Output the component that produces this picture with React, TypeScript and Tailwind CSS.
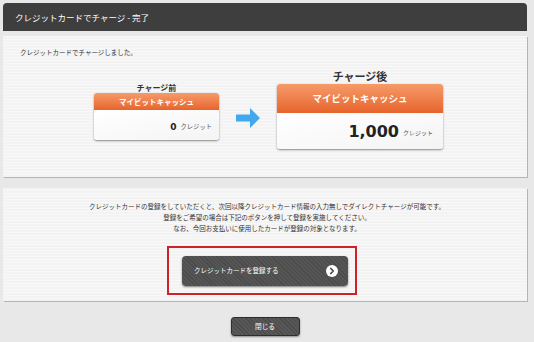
import { ChevronRight } from 'lucide-react';

const jp = { fontFamily: '"Noto Sans CJK JP", "Noto Sans", sans-serif' };

function CashCard({ big }: { big: boolean }) {
  // orange header + white body, two sizes (before / after)
  return (
    <div
      className={
        big
          ? 'w-[166px] h-[65px] rounded-[3px] overflow-hidden bg-white shadow-[0_1px_2px_rgba(0,0,0,0.45)] flex flex-col'
          : 'w-[125px] h-[47px] rounded-[3px] overflow-hidden bg-white shadow-[0_1px_2px_rgba(0,0,0,0.45)] flex flex-col'
      }
    >
      <div
        className={
          big
            ? 'h-[29px] flex items-center justify-center bg-gradient-to-b from-[#f59b68] to-[#e7632b] text-white font-bold text-[9.5px]'
            : 'h-[17px] flex items-center justify-center bg-gradient-to-b from-[#f59b68] to-[#e7632b] text-white font-bold text-[7.5px]'
        }
      >
        マイビットキャッシュ
      </div>
      <div
        className={
          big
            ? 'flex-1 flex items-center justify-end pr-[10px] pt-[2px] bg-gradient-to-br from-white to-[#f4f4f4]'
            : 'flex-1 flex items-center justify-end pr-[7px] pt-[4px] bg-gradient-to-br from-white to-[#f4f4f4]'
        }
      >
        <span
          className={big ? 'font-bold text-[16px] text-[#222] leading-none' : 'font-bold text-[9px] text-[#222] leading-none'}
          style={{ fontFamily: '"DejaVu Sans", sans-serif' }}
        >
          {big ? '1,000' : '0'}
        </span>
        <span className={big ? 'ml-[4px] text-[6px] text-[#555]' : 'ml-[4px] text-[6.3px] text-[#555]'}>クレジット</span>
      </div>
    </div>
  );
}

export default function App() {
  return (
    <div className="w-[534px] h-[342px] overflow-hidden bg-[#e8e8e8] pl-[3px] pt-[3px]" style={jp}>
      <div className="w-[524px]">
        {/* title bar */}
        <div className="h-[28px] rounded-t-[4px] bg-[#3e3e3e] flex items-center pl-[12px] text-white text-[8.5px]">
          クレジットカードでチャージ - 完了
        </div>

        {/* result panel */}
        <div className="mt-[5px] h-[141px] bg-[repeating-linear-gradient(0deg,#f3f3f3_0px,#f3f3f3_2px,#f8f8f8_2px,#f8f8f8_3px)] shadow-[1px_1px_0_#b5b5b5]">
          <p className="pl-[17px] pt-[12px] text-[6.5px] leading-[8px] text-[#333]">クレジットカードでチャージしました。</p>
          <div className="mt-[14px] flex justify-center items-start gap-[17px] pl-[7px]">
            <div className="mt-[13px] flex flex-col items-center">
              <div className="h-[10px] leading-[10px] text-[8px] font-bold text-[#333]">チャージ前</div>
              <CashCard big={false} />
            </div>
            <svg className="mt-[38px]" width="24" height="20" viewBox="0 0 24 20">
              <path d="M0 6.5H14V0L24 10L14 20V13.5H0Z" fill="#40a8ee" />
            </svg>
            <div className="flex flex-col items-center">
              <div className="h-[14px] leading-[13px] text-[11px] font-bold text-[#333]">チャージ後</div>
              <CashCard big={true} />
            </div>
          </div>
        </div>

        {/* register panel */}
        <div className="mt-[11px] h-[113px] bg-[repeating-linear-gradient(0deg,#f3f3f3_0px,#f3f3f3_2px,#f8f8f8_2px,#f8f8f8_3px)] shadow-[1px_1px_0_#b5b5b5] pt-[13px]">
          <div className="text-center text-[6.5px] leading-[11px] text-[#333] pl-[4px]">
            <p>クレジットカードの登録をしていただくと、次回以降クレジットカード情報の入力無しでダイレクトチャージが可能です。</p>
            <p>登録をご希望の場合は下記のボタンを押して登録を実施してください。</p>
            <p>なお、今回お支払いに使用したカードが登録の対象となります。</p>
          </div>
          <div className="mt-[12px] flex justify-center pr-[6px]">
            <div className="w-[190px] h-[49px] border-2 border-[#d0202a] pl-[13px] pt-[8px]">
              <button className="w-[166px] h-[30px] rounded-[4px] bg-[repeating-linear-gradient(45deg,#4b4b4b_0px,#4b4b4b_1px,#555555_1px,#555555_3px)] shadow-[0_1px_2px_rgba(0,0,0,0.5)] flex items-center justify-between pl-[12px] pr-[10px] text-white text-[6.5px]">
                <span>クレジットカードを登録する</span>
                <span className="w-[12px] h-[12px] rounded-full bg-white flex items-center justify-center">
                  <ChevronRight size={10} strokeWidth={4} color="#444" />
                </span>
              </button>
            </div>
          </div>
        </div>

        <div className="mt-[16px] flex justify-center">
          <button className="w-[69px] h-[19px] rounded-[3px] border border-[#2e2e2e] bg-[repeating-linear-gradient(45deg,#4b4b4b_0px,#4b4b4b_1px,#575757_1px,#575757_3px)] shadow-[0_1px_2px_rgba(0,0,0,0.4)] text-white text-[6.7px] flex items-center justify-center">
            閉じる
          </button>
        </div>
      </div>
    </div>
  );
}
